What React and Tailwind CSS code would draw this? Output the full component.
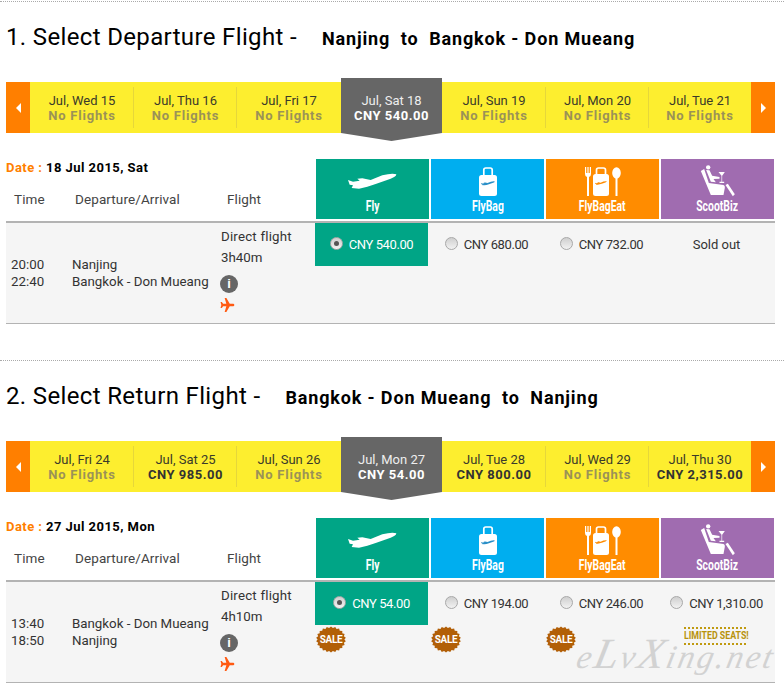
const FONT = "font-['Roboto','Noto_Sans',sans-serif]";

function Plane() {
  return (
    <svg width="49" height="16" viewBox="27 41 147 48">
      <path d="M27 62 L42 67 L62 64 L55 58 L70 57 L95 62 L130 48 Q160 40 172 45 Q172 52 155 58 L110 74 L85 82 L60 88 L38 86 L42 78 L32 76 Z" fill="#fff" />
    </svg>
  );
}

function SmallPlane({ x, y, w, c }) {
  return (
    <svg x={x} y={y} width={w} height={w * 0.33} viewBox="27 41 147 48">
      <path d="M27 62 L42 67 L62 64 L55 58 L70 57 L95 62 L130 48 Q160 40 172 45 Q172 52 155 58 L110 74 L85 82 L60 88 L38 86 L42 78 L32 76 Z" fill={c} />
    </svg>
  );
}

function BagIcon() {
  return (
    <svg width="18" height="29" viewBox="0 0 18 29">
      <rect x="4.800" y="1" width="8.400" height="9" rx="2" fill="none" stroke="#fff" strokeWidth="1.700" />
      <rect x="0" y="8" width="18" height="21" rx="2.500" fill="#fff" />
      <SmallPlane x={2} y={14} w={14} c="#2a8fc7" />
    </svg>
  );
}

function EatIcon() {
  return (
    <svg width="36" height="29" viewBox="0 0 36 29">
      <path d="M0 0 H1.200 V6 H2.400 V0 H3.600 V6 H4.800 V0 H6 V7 Q6 9.500 4 10 V29 H2 V10 Q0 9.500 0 7 Z" fill="#fff" />
      <rect x="11.500" y="1" width="9" height="8" rx="2" fill="none" stroke="#fff" strokeWidth="1.700" />
      <rect x="8" y="7" width="16" height="22" rx="2.500" fill="#fff" />
      <SmallPlane x={10} y={14} w={12} c="#ff8c00" />
      <ellipse cx="31.500" cy="6" rx="4.300" ry="5.800" fill="#fff" />
      <rect x="30.500" y="10" width="2" height="19" fill="#fff" />
    </svg>
  );
}

function SeatIcon() {
  return (
    <svg width="37" height="32" viewBox="45 12 110 96">
      <circle cx="72" cy="19" r="6.500" fill="#fff" />
      <path d="M50 30 L60 24 L74 66 L118 72 Q123 74 122 80 L118 102 L80 102 Z" fill="#fff" />
      <path d="M66 27 L76 28 L84 44 L106 48 L106 53 L88 54 L95 64 L80 62 Z" fill="#fff" />
      <path d="M103 33 H122 L114 44 V62 H120 V66 H106 V62 H112 V44 Z" fill="#fff" />
      <path d="M124 72 L131 68 L152 100 L146 106 Z" fill="#fff" />
    </svg>
  );
}

function Radio({ on }) {
  return (
    <span className="relative inline-block w-[13px] h-[13px] rounded-full border border-[#a8a8a8] bg-gradient-to-b from-[#cfcfcf] to-[#f2f2f2]">
      {on && <span className="absolute left-[3px] top-[3px] w-[5px] h-[5px] rounded-full bg-[#555]" />}
    </span>
  );
}

function Sale() {
  const pts = [];
  for (let i = 0; i < 44; i++) {
    const r = i % 2 ? 15 : 13.4;
    const a = (i / 44) * Math.PI * 2;
    pts.push(`${15 + r * Math.cos(a)},${13.5 + (r * Math.sin(a) * 13) / 15}`);
  }
  return (
    <div className="relative w-[30px] h-[27px]">
      <svg width="30" height="27" viewBox="0 0 30 27" className="absolute left-0 top-0">
        <polygon points={pts.join(" ")} fill="#b25f07" />
      </svg>
      <span className="absolute inset-0 flex items-center justify-center text-[10px] font-bold text-white tracking-[-0.4px]">SALE</span>
    </div>
  );
}

function Limited() {
  return (
    <div className="ml-[24px] mt-[2px] w-[62px] flex flex-col">
      <div className="h-[2px] border-t-2 border-dotted border-[#c09a10]" />
      <div className="h-[14px] text-[11px] leading-[14px] font-bold text-[#b8920c] whitespace-nowrap origin-left scale-x-[0.8]">LIMITED SEATS!</div>
      <div className="h-[2px] border-t-2 border-dotted border-[#c09a10]" />
    </div>
  );
}

function DateCell({ date, price, sel, w }) {
  if (sel) {
    return (
      <div className="w-[101px] shrink-0 h-[63px] -mt-[4px] bg-[#666666] text-white text-center pt-[15px] [clip-path:polygon(0_0,100%_0,100%_55px,50%_63px,0_55px)]">
        <div className="text-[13px] leading-[15px] text-[#eee]">{date}</div>
        <div className="text-[13px] leading-[15px] font-bold tracking-[0.5px]">{price}</div>
      </div>
    );
  }
  return (
    <div className={`${w} shrink-0 h-[51px] pt-[11px] text-center`}>
      <div className="text-[13px] leading-[15px] text-[#3a3a2a]">{date}</div>
      <div className={`text-[13px] leading-[15px] font-bold ${price === "No Flights" ? "text-[#9b9257] tracking-[0.8px]" : "text-[#333] tracking-[0.5px]"}`}>{price}</div>
    </div>
  );
}

const widths = ["w-[104px]", "w-[103px]", "w-[104px]", "w-[101px]", "w-[104px]", "w-[103px]", "w-[102px]"];

function Strip({ days }) {
  return (
    <div className="mx-[6px] w-[769px] h-[51px] bg-[#fdee2f] flex">
      <div className="w-[24px] shrink-0 bg-[#ff7f00] flex items-center justify-center">
        <span className="w-0 h-0 border-y-[5px] border-y-transparent border-r-[5px] border-r-white" />
      </div>
      {days.map((d, i) => (
        <div key={i} className="flex">
          {i > 0 && !d.sel && !days[i - 1].sel && <div className="w-px h-[41px] mt-[5px] -ml-px bg-[#e6d73a]" />}
          <DateCell {...d} w={widths[i]} />
        </div>
      ))}
      <div className="w-[24px] shrink-0 bg-[#ff7f00] flex items-center justify-center">
        <span className="w-0 h-0 border-y-[5px] border-y-transparent border-l-[5px] border-l-white" />
      </div>
    </div>
  );
}

function Tile({ bg, label, children }) {
  return (
    <div className={`${bg} w-[113px] h-[60px] flex flex-col items-center text-white`}>
      <div className="h-[41px] flex items-center justify-center pt-[3px]">{children}</div>
      <div className="text-[13px] leading-[14px] font-bold scale-x-[0.8] scale-y-[1.1] whitespace-nowrap">{label}</div>
    </div>
  );
}

function PriceCell({ price, on, tag }) {
  return (
    <div className="w-[113px] mr-[2px]">
      <div className={`h-[43px] flex items-center justify-center gap-[6px] text-[13px] ${on ? "bg-[#00a586] text-white" : "text-[#333]"}`}>
        {price ? (
          <>
            <span className="-mt-[3px] flex"><Radio on={on} /></span>
            <span className="tracking-[-0.4px]">{price}</span>
          </>
        ) : (
          <span>Sold out</span>
        )}
      </div>
      {tag === "sale" && <div className="ml-[1px] mt-[1px]"><Sale /></div>}
      {tag === "limited" && <Limited />}
    </div>
  );
}

function Section({ title, route, days, date, t1, t2, from, to, dur, prices }) {
  return (
    <section className="h-[359px] pt-px">
      <div className="h-px border-t border-dotted border-[#aaa]" />
      <div className="h-[80px] pl-[6px] pt-[20px] flex items-baseline text-black">
        <span className="text-[24px] leading-[30px] tracking-[0.35px]">{title}</span>
        <span className="text-[18px] font-bold tracking-[0.85px] ml-[25px] whitespace-pre">{route}</span>
      </div>
      <Strip days={days} />
      <div className="mt-[26px] mx-[6px] w-[769px] flex">
        <div className="w-[310px] shrink-0 h-[60px] text-[#444] text-[13.5px] pt-px">
          <div className="text-[13px] font-bold leading-[16px] text-black tracking-[0.45px]">
            <span className="text-[#ff7f00]">Date : </span>{date}
          </div>
          <div className="flex mt-[15px] leading-[16px] tracking-[0.1px]">
            <span className="ml-[8px] w-[61px]">Time</span>
            <span className="w-[152px]">Departure/Arrival</span>
            <span>Flight</span>
          </div>
        </div>
        <div className="flex gap-[2px]">
          <Tile bg="bg-[#00a586]" label="Fly"><Plane /></Tile>
          <Tile bg="bg-[#00aeef]" label="FlyBag"><BagIcon /></Tile>
          <Tile bg="bg-[#ff8c00]" label="FlyBagEat"><EatIcon /></Tile>
          <Tile bg="bg-[#a06cb0]" label="ScootBiz"><SeatIcon /></Tile>
        </div>
      </div>
      <div className="mx-[6px] w-[769px] mt-[2px] h-[103px] border-t-2 border-t-[#b3b3b3] border-b border-b-[#b3b3b3] bg-[#f5f5f5] flex text-[13.3px] text-[#333]">
        <div className="w-[309px] shrink-0 flex">
          <div className="w-[66px] pl-[5px] pt-[33px] leading-[17px]"><div>{t1}</div><div>{t2}</div></div>
          <div className="w-[149px] pt-[33px] leading-[17px] whitespace-nowrap"><div>{from}</div><div>{to}</div></div>
          <div className="pt-[5px]">
            <div className="leading-[17px] tracking-[0.2px]">Direct flight</div>
            <div className="leading-[17px] mt-[4px]">{dur}</div>
            <div className="mt-[9px] -ml-px w-[18px] h-[18px] rounded-full bg-[#666] text-white font-bold text-[13px] leading-[18px] text-center font-['Liberation_Sans',sans-serif]">i</div>
            <svg width="16" height="16" viewBox="0 0 24 24" className="mt-[4px] -ml-px">
              <path d="M21.500 12c0-1.200-1.100-2-2.400-2H14.600L9.600 1.500H7l2.500 8.500H4.600L2.800 7.600H.8L2 12 .8 16.400h2l1.800-2.400h4.900L7 22.500h2.600l5-8.500h4.500c1.300 0 2.400-.8 2.400-2z" fill="#ff5a12" />
            </svg>
          </div>
        </div>
        <div className="flex">
          {prices.map((p, i) => <PriceCell key={i} {...p} />)}
        </div>
      </div>
    </section>
  );
}

const nf = "No Flights";

export default function App() {
  return (
    <div className={`relative w-[784px] h-[691px] overflow-hidden bg-white ${FONT}`}>
      <Section
        title="1. Select Departure Flight -"
        route="Nanjing  to  Bangkok - Don Mueang"
        date="18 Jul 2015, Sat"
        t1="20:00" t2="22:40" from="Nanjing" to="Bangkok - Don Mueang" dur="3h40m"
        days={[
          { date: "Jul, Wed 15", price: nf },
          { date: "Jul, Thu 16", price: nf },
          { date: "Jul, Fri 17", price: nf },
          { date: "Jul, Sat 18", price: "CNY 540.00", sel: true },
          { date: "Jul, Sun 19", price: nf },
          { date: "Jul, Mon 20", price: nf },
          { date: "Jul, Tue 21", price: nf },
        ]}
        prices={[
          { price: "CNY 540.00", on: true },
          { price: "CNY 680.00" },
          { price: "CNY 732.00" },
          {},
        ]}
      />
      <Section
        title="2. Select Return Flight -"
        route="Bangkok - Don Mueang  to  Nanjing"
        date="27 Jul 2015, Mon"
        t1="13:40" t2="18:50" from="Bangkok - Don Mueang" to="Nanjing" dur="4h10m"
        days={[
          { date: "Jul, Fri 24", price: nf },
          { date: "Jul, Sat 25", price: "CNY 985.00" },
          { date: "Jul, Sun 26", price: nf },
          { date: "Jul, Mon 27", price: "CNY 54.00", sel: true },
          { date: "Jul, Tue 28", price: "CNY 800.00" },
          { date: "Jul, Wed 29", price: nf },
          { date: "Jul, Thu 30", price: "CNY 2,315.00" },
        ]}
        prices={[
          { price: "CNY 54.00", on: true, tag: "sale" },
          { price: "CNY 194.00", tag: "sale" },
          { price: "CNY 246.00", tag: "sale" },
          { price: "CNY 1,310.00", tag: "limited" },
        ]}
      />
      <div className="absolute left-[578px] top-[636px] h-[36px] whitespace-nowrap text-[33px] leading-[36px] italic text-[#d2d2d2] tracking-[2.5px] -skew-x-12 font-['Liberation_Serif',serif]">e<span className="text-[43px] leading-[36px]">L</span>v<span className="text-[43px] leading-[36px]">X</span>ing.net</div>
    </div>
  );
}
